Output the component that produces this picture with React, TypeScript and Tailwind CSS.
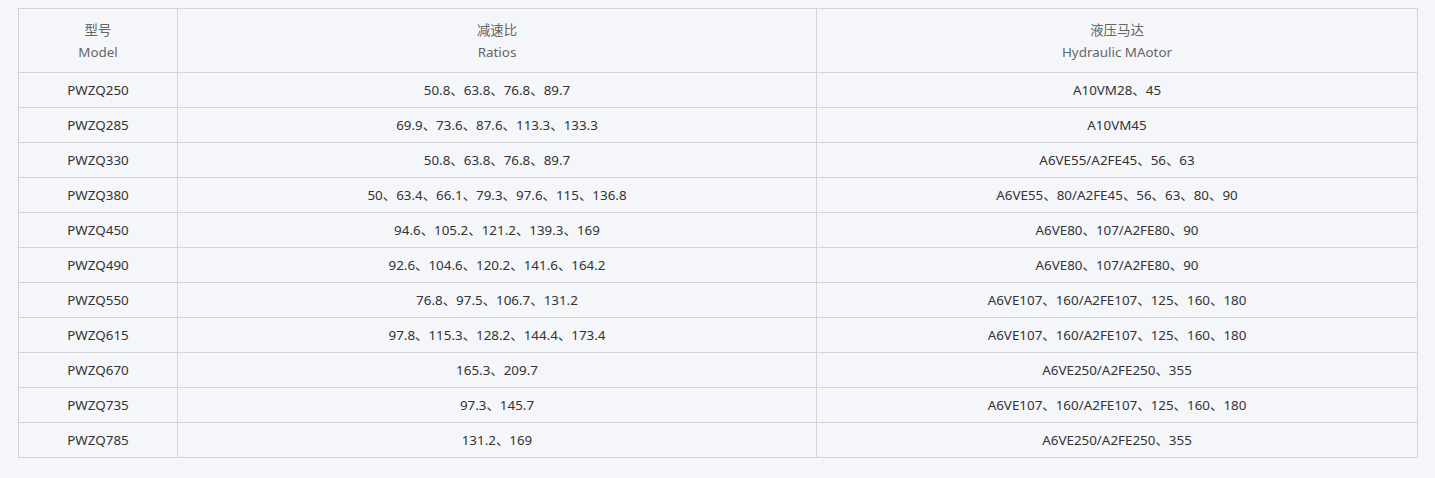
const rows: [string, string, string][] = [
  ["PWZQ250", "50.8、63.8、76.8、89.7", "A10VM28、45"],
  ["PWZQ285", "69.9、73.6、87.6、113.3、133.3", "A10VM45"],
  ["PWZQ330", "50.8、63.8、76.8、89.7", "A6VE55/A2FE45、56、63"],
  ["PWZQ380", "50、63.4、66.1、79.3、97.6、115、136.8", "A6VE55、80/A2FE45、56、63、80、90"],
  ["PWZQ450", "94.6、105.2、121.2、139.3、169", "A6VE80、107/A2FE80、90"],
  ["PWZQ490", "92.6、104.6、120.2、141.6、164.2", "A6VE80、107/A2FE80、90"],
  ["PWZQ550", "76.8、97.5、106.7、131.2", "A6VE107、160/A2FE107、125、160、180"],
  ["PWZQ615", "97.8、115.3、128.2、144.4、173.4", "A6VE107、160/A2FE107、125、160、180"],
  ["PWZQ670", "165.3、209.7", "A6VE250/A2FE250、355"],
  ["PWZQ735", "97.3、145.7", "A6VE107、160/A2FE107、125、160、180"],
  ["PWZQ785", "131.2、169", "A6VE250/A2FE250、355"],
];

const headers: [string, string][] = [
  ["型号", "Model"],
  ["减速比", "Ratios"],
  ["液压马达", "Hydraulic MAotor"],
];

export default function App() {
  return (
    <div
      className="min-h-[478px] bg-[#f5f6fa] pt-2 pl-[18px]"
      style={{ fontFamily: '"Noto Sans", "Noto Sans CJK SC", sans-serif' }}
    >
      <table className="w-[1399px] table-fixed border-collapse text-[13.4px]">
        <colgroup>
          <col className="w-[159px]" />
          <col className="w-[639px]" />
          <col className="w-[601px]" />
        </colgroup>
        <thead>
          <tr>
            {headers.map(([zh, en]) => (
              <th
                key={en}
                className="h-[64px] border border-[#d4d4d4] p-0 text-center align-middle font-normal leading-[22px] text-[#666]"
              >
                <div>{zh}</div>
                <div>{en}</div>
              </th>
            ))}
          </tr>
        </thead>
        <tbody>
          {rows.map((r) => (
            <tr key={r[0]}>
              {r.map((c, i) => (
                <td
                  key={i}
                  className="h-[35px] border border-[#d4d4d4] p-0 text-center align-middle leading-[22px] text-[#333]"
                >
                  {c}
                </td>
              ))}
            </tr>
          ))}
        </tbody>
      </table>
    </div>
  );
}
